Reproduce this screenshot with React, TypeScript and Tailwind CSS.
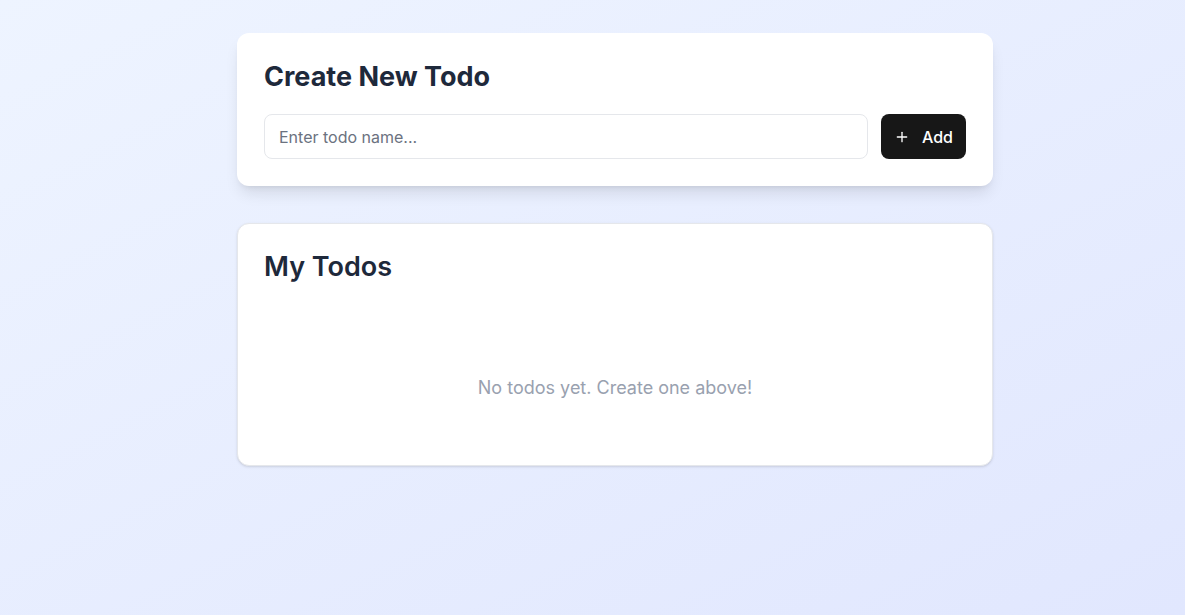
import React from "react";
import { Plus } from "lucide-react";

export default function App() {
  return (
    <div
      className="min-h-screen w-full bg-gradient-to-br from-[#eef4ff] to-[#e1e7fe] pt-[33px] pb-10"
      style={{ fontFamily: "Inter, 'Noto Sans', sans-serif" }}
    >
      <div className="ml-[237px] w-[756px] flex flex-col gap-[37px]">
        <div className="bg-white rounded-xl shadow-lg p-[27px]">
          <h1 className="text-[27px] font-bold leading-[34px] text-[#1e293b] mb-[20px]">
            Create New Todo
          </h1>
          <div className="flex gap-[13px]">
            <input
              type="text"
              placeholder="Enter todo name..."
              className="flex-1 h-[45px] rounded-lg border border-gray-200 px-[14px] text-base text-gray-900 placeholder:text-[#6b7280] outline-none"
            />
            <button className="h-[45px] flex items-center gap-3 rounded-lg bg-[#171717] px-[13px] text-white text-base font-medium">
              <Plus size={16} strokeWidth={2} />
              <span>Add</span>
            </button>
          </div>
        </div>

        <div className="bg-white rounded-xl border border-gray-200 shadow-sm px-[26px] pt-[27px] pb-[27px]">
          <h2 className="text-[27px] font-semibold leading-8 text-[#1e293b]">
            My Todos
          </h2>
          <div className="pt-[91px] pb-[36px] text-center">
            <p className="text-lg leading-7 text-gray-400">
              No todos yet. Create one above!
            </p>
          </div>
        </div>
      </div>
    </div>
  );
}
